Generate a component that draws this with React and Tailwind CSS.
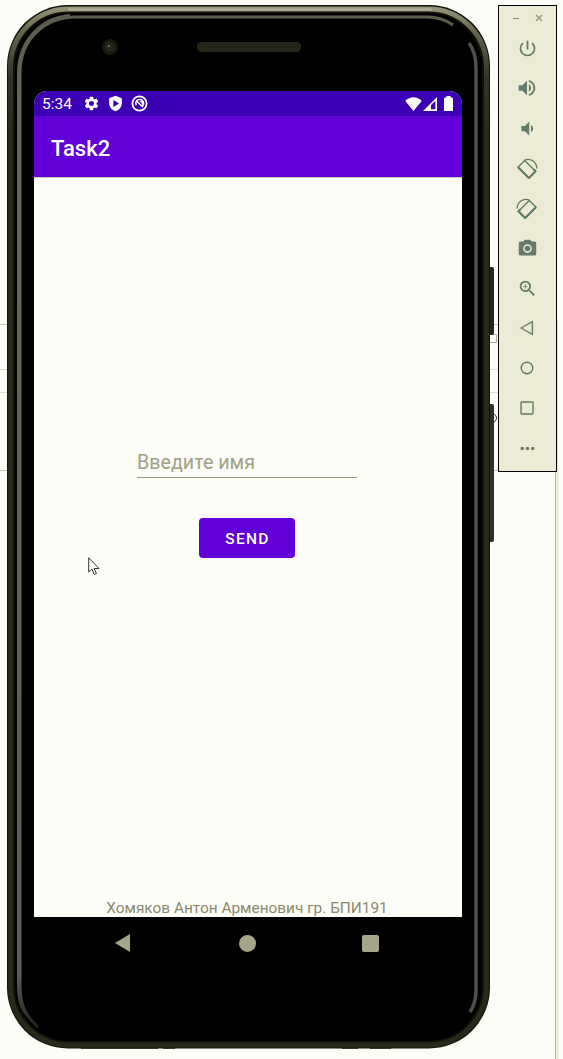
import React from "react";
import { MdSettings, MdPowerSettingsNew, MdVolumeUp, MdVolumeDown, MdPhotoCamera, MdZoomIn, MdMoreHoriz } from "react-icons/md";

const Rotate = ({ flip }) => (
  <svg viewBox="0 0 24 24" className={flip ? "mt-[2px] h-[22px] w-[22px] -scale-x-100" : "mt-[2px] h-[22px] w-[22px]"} fill="none" stroke="currentColor">
    <path d="M9.5 2.7 21.3 14.5 13.8 22 2 10.2Z" strokeWidth="1.5" strokeLinejoin="round" />
    <path d="M2.3 10 14 21.7M19.4 12.6 21.3 14.5 13.8 22" strokeWidth="2.2" />
    <path d="M9.5 2.2C16.5-.2 22.5 4.5 22.8 11.5" strokeWidth="1.5" />
  </svg>
);

function PhoneFrame() {
  return (
    <svg viewBox="0 0 563 1059" className="absolute inset-0 h-[1059px] w-[563px]" fill="none">
      <defs>
        <linearGradient id="rim" gradientUnits="userSpaceOnUse" x1="0" y1="5" x2="0" y2="1048">
          <stop offset="0" stopColor="#99997c" />
          <stop offset="0.025" stopColor="#66664f" />
          <stop offset="0.07" stopColor="#33332a" />
          <stop offset="0.12" stopColor="#29291b" />
          <stop offset="1" stopColor="#29291b" />
        </linearGradient>
        <linearGradient id="strip" gradientUnits="userSpaceOnUse" x1="0" y1="15" x2="0" y2="1027">
          <stop offset="0" stopColor="#5c5c4c" />
          <stop offset="0.1" stopColor="#66665a" />
          <stop offset="0.95" stopColor="#5c5c54" />
          <stop offset="1" stopColor="#222220" />
        </linearGradient>
      </defs>
      <path d="M0 324.5H8M490 324.5H499M0 470.5H8M490 470.5H499" stroke="#c4c4b4" />
      <path d="M0 369.5H8M490 369.5H499M0 392.5H8M490 392.5H499" stroke="#deded0" />
      <path d="M490 334.5H496.5V342.5H490" stroke="#aaaa99" />
      <circle cx="492" cy="418" r="4.5" stroke="#333322" />
      <path d="M555.5 472V1059" stroke="#b7b7a2" />
      <path d="M557.5 320V1059" stroke="#ebebcf" strokeWidth="2" />
      <rect x="484" y="267" width="10" height="68" rx="2" fill="#26261e" />
      <rect x="484" y="404" width="10" height="138" rx="2" fill="#303027" />
      <rect x="7" y="5" width="483" height="1043.5" rx="61" fill="#111109" />
      <rect x="10.5" y="9" width="476" height="1036" rx="58" stroke="url(#rim)" strokeWidth="5" />
      <path d="M68 9.5H432" stroke="#b0b096" strokeWidth="2" />
      <rect x="15" y="13" width="467" height="1028" rx="54" fill="#000" />
      <path d="M38 1027C25 1016 20 1004 20 985V73C20 40 44 17 76 17H427C438 17 446 20 453 25" stroke="url(#strip)" strokeWidth="3" />
      <path d="M30 1018C21 1010 18.5 1000 18.5 985V73C18.5 43 39 18 70 15.5" stroke="url(#strip)" strokeWidth="3" />
      <path d="M469 43C474 50 476 57 476 68V990C476 1000 474 1006 470 1012" stroke="#505049" strokeWidth="3.5" />
      <circle cx="110" cy="47" r="8" fill="#171710" />
      <circle cx="110" cy="47" r="5" fill="#26261c" />
      <circle cx="109" cy="46" r="1" fill="#777766" />
      <rect x="197" y="42" width="104" height="10" rx="4.5" fill="#242419" />
      <path d="M81 1048.5H158M163 1048.5H175M342 1048.5H358M370 1048.5H391" stroke="#333322" />
    </svg>
  );
}

function StatusBar() {
  return (
    <div className="flex h-[25px] shrink-0 items-center bg-[#3b00b3] pl-[8px] pr-[8px] text-white">
      <span className="w-[41px] pt-[2px] text-[15.5px] leading-[25px]">5:34</span>
      <MdSettings className="h-[17px] w-[17px]" />
      <svg viewBox="0 0 24 24" className="ml-[7px] h-[17px] w-[17px]">
        <path d="M12 1 21 4.5V11C21 17 17 21.5 12 23 7 21.5 3 17 3 11V4.5Z" fill="currentColor" />
        <path d="m9 7 8 5-8 5Z" fill="#3300a0" />
      </svg>
      <svg viewBox="0 0 24 24" className="ml-[7px] h-[17px] w-[17px]" fill="none" stroke="currentColor">
        <circle cx="12" cy="12" r="10" strokeWidth="2.5" />
        <path d="M7.5 14.5A5.5 5.5 0 1 1 15 16.5M7 8l10 9" strokeWidth="2.2" />
        <path d="m12 8 5 1v5Z" fill="currentColor" stroke="none" />
      </svg>
      <svg viewBox="0 0 17 14" className="ml-auto h-[14px] w-[17px]"><path d="M.3 4C5-.9 12-.9 16.7 4L8.5 14Z" fill="currentColor" /></svg>
      <svg viewBox="0 0 14 14" className="ml-[1px] h-[14px] w-[14px]">
        <path d="M0 14 14 0V14ZM8 8V12.3H12.4V4Z" fill="currentColor" fillRule="evenodd" />
      </svg>
      <svg viewBox="0 0 9 15" className="ml-[7px] mr-[1px] h-[15px] w-[9px]"><path d="M2.5 0H6.5V1.5H8L9 2.5V15H0V2.5L1 1.5H2.5Z" fill="currentColor" /></svg>
    </div>
  );
}

function Toolbar() {
  const items = [
    <MdPowerSettingsNew key="power" className="h-[21px] w-[21px]" />,
    <MdVolumeUp key="up" className="h-[22px] w-[22px]" />,
    <MdVolumeDown key="down" className="h-[21px] w-[21px]" />,
    <Rotate key="left" />,
    <Rotate key="right" flip />,
    <MdPhotoCamera key="camera" className="h-[21px] w-[21px]" />,
    <MdZoomIn key="zoom" className="h-[21px] w-[21px]" />,
    <svg key="back" viewBox="0 0 24 24" className="h-[20px] w-[20px]" fill="none" stroke="currentColor" strokeWidth="1.6"><path d="M5 12 18.5 4.5V19.5Z" /></svg>,
    <svg key="home" viewBox="0 0 20 20" className="h-[20px] w-[20px]" fill="none" stroke="currentColor" strokeWidth="1.4"><circle cx="10" cy="10" r="5.8" /></svg>,
    <svg key="recent" viewBox="0 0 20 20" className="h-[20px] w-[20px]" fill="none" stroke="currentColor" strokeWidth="1.4"><rect x="4" y="4" width="12" height="12" rx=".7" /></svg>,
    <MdMoreHoriz key="more" className="h-[21px] w-[21px]" />,
  ];
  return (
    <aside className="absolute left-[498px] top-[5px] flex h-[467px] w-[59px] flex-col border border-black bg-[#ececd6] text-[#667a6c]">
      <div className="flex h-[22px] shrink-0 items-center justify-between pl-[13px] pr-[13px] pt-[2px] text-[#92928c]">
        <svg viewBox="0 0 8 8" className="h-[8px] w-[8px]" stroke="currentColor"><path d="M1 4.5H7" /></svg>
        <svg viewBox="0 0 8 8" className="h-[8px] w-[8px]" stroke="currentColor" strokeWidth="1.4"><path d="m1 1 6 6M7 1 1 7" /></svg>
      </div>
      {items.map((item) => <div key={item.key} className="flex h-[40px] shrink-0 items-center justify-center pr-px">{item}</div>)}
    </aside>
  );
}

export default function App() {
  return (
    <main className="relative h-[1059px] w-[563px] overflow-hidden bg-[#fdfdf8] pl-[34px] pt-[91px] font-['Roboto',sans-serif]">
      <PhoneFrame />
      <div className="relative flex h-[826px] w-[428px] flex-col overflow-hidden rounded-t-[13px] bg-[#fdfdf8]">
        <StatusBar />
        <header className="flex h-[61px] shrink-0 items-center bg-[#6200d9] pl-[17px] pt-[3px] text-[22px] font-medium text-white">Task2</header>
        <section className="flex flex-1 flex-col items-center border-t border-[#c8c8bd]">
          <input aria-label="Имя" placeholder="Введите имя" className="mr-[2px] mt-[266px] h-[34px] w-[220px] border-b-[1.5px] border-[#9d9d79] bg-transparent pt-[4px] text-[19.7px] outline-none placeholder:text-[#a1a187]" />
          <button className="mr-[3px] mt-[40px] h-[40px] w-[96px] rounded-[4px] bg-[#6200d9] pl-[2px] pt-[3px] text-[15.5px] font-medium tracking-[1.35px] text-white">SEND</button>
          <footer className="mb-[-1px] mr-[2px] mt-auto whitespace-nowrap text-[15.4px] leading-[20px] text-[#89896e]">Хомяков Антон Арменович гр. БПИ191</footer>
        </section>
      </div>
      <nav className="relative flex h-[52px] w-[428px] items-center text-[#a5a589]">
        <svg viewBox="0 0 17 18" className="ml-[80px] h-[18px] w-[17px]"><path d="M1 9 16 0V18Z" fill="currentColor" /></svg>
        <span className="ml-[108px] h-[17px] w-[17px] rounded-full bg-current" />
        <span className="ml-[106px] h-[17px] w-[17px] rounded-[2px] bg-current" />
      </nav>
      <Toolbar />
      <svg viewBox="0 0 12 18" className="absolute left-[88px] top-[557px] h-[18px] w-[12px]"><path d="M.7.8V15l3.1-3 2.5 5.5 2.2-1-2.4-5H11Z" fill="#fff" stroke="#333329" /></svg>
    </main>
  );
}
